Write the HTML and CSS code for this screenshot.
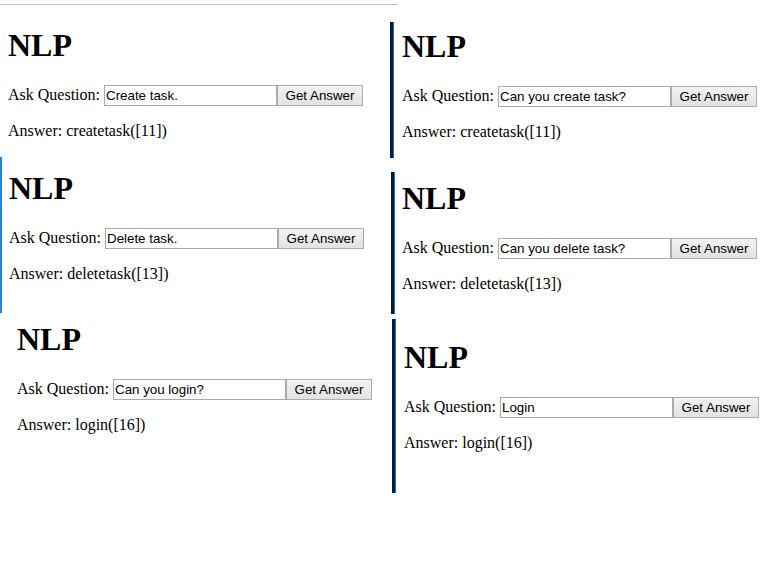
FILE: index.html
```html
<!DOCTYPE html>
<html lang="en">
<head>
<meta charset="utf-8">
<title>NLP</title>
<link rel="stylesheet" href="styles.css">
</head>
<body>
<div class="collage">
  <div class="col">
    <section class="shot shot-a">
      <div class="rule"></div>
      <h1>NLP</h1>
      <div class="ask"><label>Ask Question:</label><input type="text" value="Create task."><button type="button">Get Answer</button></div>
      <p class="answer">Answer: createtask([11])</p>
    </section>
    <section class="shot shot-b">
      <h1>NLP</h1>
      <div class="ask"><label>Ask Question:</label><input type="text" value="Delete task."><button type="button">Get Answer</button></div>
      <p class="answer">Answer: deletetask([13])</p>
    </section>
    <section class="shot shot-c">
      <h1>NLP</h1>
      <div class="ask"><label>Ask Question:</label><input type="text" value="Can you login?"><button type="button">Get Answer</button></div>
      <p class="answer">Answer: login([16])</p>
    </section>
  </div>
  <div class="col">
    <section class="shot framed shot-d">
      <h1>NLP</h1>
      <div class="ask"><label>Ask Question:</label><input type="text" value="Can you create task?"><button type="button">Get Answer</button></div>
      <p class="answer">Answer: createtask([11])</p>
    </section>
    <section class="shot framed shot-e">
      <h1>NLP</h1>
      <div class="ask"><label>Ask Question:</label><input type="text" value="Can you delete task?"><button type="button">Get Answer</button></div>
      <p class="answer">Answer: deletetask([13])</p>
    </section>
    <section class="shot framed shot-f">
      <h1>NLP</h1>
      <div class="ask"><label>Ask Question:</label><input type="text" value="Login"><button type="button">Get Answer</button></div>
      <p class="answer">Answer: login([16])</p>
    </section>
  </div>
</div>
</body>
</html>
```
FILE: styles.css
```css
html, body {
  margin: 0;
  padding: 0;
  background: #ffffff;
}

body {
  font-family: "Liberation Serif", "Times New Roman", serif;
  font-size: 16px;
  color: #000000;
}

.collage {
  display: grid;
  grid-template-columns: 390px 1fr;
  width: 777px;
  height: 574px;
  overflow: hidden;
}

.col {
  display: flex;
  flex-direction: column;
  min-width: 0;
}

.shot {
  box-sizing: border-box;
  flex: none;
}

.shot h1 {
  font-size: 32px;
  line-height: 37px;
  font-weight: bold;
  margin: 0 0 21px;
}

.ask {
  display: flex;
  flex-wrap: nowrap;
  align-items: flex-start;
  height: 21px;
  white-space: nowrap;
}

.ask label {
  line-height: 17px;
  margin: 1px 4px 0 0;
}

.ask input {
  box-sizing: border-box;
  width: 173px;
  height: 21px;
  margin: 0;
  padding: 0 1px;
  border: 1px solid #a9a9a9;
  border-radius: 0;
  background: #ffffff;
  font-family: "Liberation Sans", Arial, sans-serif;
  font-size: 13.33px;
  color: #000000;
  outline: none;
}

.ask button {
  box-sizing: border-box;
  width: 86px;
  height: 21px;
  margin: 0;
  padding: 0;
  border: 1px solid #adadad;
  border-radius: 0;
  background: linear-gradient(#f2f2f2, #e2e2e2);
  font-family: "Liberation Sans", Arial, sans-serif;
  font-size: 13.33px;
  color: #000000;
}

.answer {
  margin: 16px 0 0;
  line-height: 18px;
}

/* left column */
.shot-a {
  height: 157px;
  padding-left: 8px;
}

.rule {
  margin: 4px 0 22px -8px;
  width: 398px;
  height: 1px;
  background: #c3c3c3;
}

.shot-b {
  height: 156px;
  padding: 13px 0 0 7px;
  border-left: 2px solid #1e88e5;
}

.shot-c {
  padding: 8px 0 0 17px;
}

/* right column */
.framed {
  border-left: 3px solid #071b36;
  box-shadow: inset 1px 0 0 #1b6fc2;
}

.shot-d {
  margin-top: 22px;
  height: 136px;
  padding: 6px 0 0 9px;
}

.shot-e {
  margin-top: 14px;
  margin-left: 1px;
  height: 142px;
  padding: 8px 0 0 8px;
}

.shot-f {
  margin-top: 5px;
  margin-left: 2px;
  height: 174px;
  padding: 20px 0 0 9px;
}
```
